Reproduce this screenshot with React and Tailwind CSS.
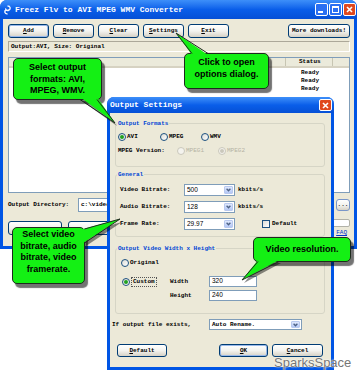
import React from "react";

function Btn({ children, className = "" }) {
  return (
    <div
      className={
        "flex items-center justify-center rounded-[3px] border border-[#003c74] bg-linear-to-b from-[#ffffff] via-[#f3f3ef] to-[#d6d2c6] text-[6px] leading-none text-black " +
        className
      }
    >
      {children}
    </div>
  );
}

function Radio({ checked, disabled }) {
  return (
    <span
      className={
        "flex h-[8px] w-[8px] shrink-0 items-center justify-center rounded-full border " +
        (disabled
          ? "border-[#cac8bb] bg-[#f4f3ee]"
          : "border-[#1c5180] bg-linear-to-br from-[#dcdcd6] to-white")
      }
    >
      {checked && (
        <span
          className={
            "h-[4px] w-[4px] rounded-full " +
            (disabled ? "bg-[#cac8bb]" : "bg-[#21a121]")
          }
        />
      )}
    </span>
  );
}

function Combo({ value, className = "", mono = false }) {
  return (
    <div className={"flex items-stretch border border-[#7f9db9] bg-white " + className}>
      <span
        className={
          "flex flex-1 items-center pl-[2px] leading-none text-black " +
          (mono
            ? "text-[6px]"
            : "font-['Liberation_Sans',Arial,sans-serif] text-[6.5px] font-normal")
        }
      >
        {value}
      </span>
      <span className="m-[1px] flex w-[9px] items-center justify-center rounded-[1px] border border-[#b9c9ef] bg-linear-to-b from-[#e0e9fd] to-[#b4c8f6]">
        <svg width="5" height="4" viewBox="0 0 5 4">
          <path d="M0.6 0.8 L2.5 2.8 L4.4 0.8" stroke="#4d6185" strokeWidth="1.3" fill="none" />
        </svg>
      </span>
    </div>
  );
}

function Group({ title, className = "", children }) {
  return (
    <div className={"relative rounded-[3px] border border-[#d6d5c6] " + className}>
      <span className="absolute -top-[4px] left-[1px] bg-[#ece9d8] px-[1px] text-[6px] leading-[7px] text-[#0046d5]">
        {title}
      </span>
      {children}
    </div>
  );
}

function Bubble({ className = "", children }) {
  return (
    <div
      className={
        "absolute rounded-[5px] border border-[#1e2a1e] bg-[#14f014] text-center font-['Liberation_Sans',Arial,sans-serif] text-[9px] font-bold leading-[11.5px] text-black shadow-[3px_4px_1px_rgba(0,0,0,0.55)] " +
        className
      }
    >
      {children}
    </div>
  );
}

export default function App() {
  return (
    <div className="relative h-[373px] w-[360px] overflow-hidden bg-white font-['Liberation_Mono',monospace]">
      {/* Main window */}
      <div className="flex h-[249px] w-[357px] flex-col rounded-t-[7px] bg-[#0055e5]">
        <div className="flex h-[19px] items-center rounded-t-[7px] bg-linear-to-b from-[#3d8ff9] via-[#0a5ee9] to-[#0650d6] pl-[3px] pr-[1px]">
          <svg width="9" height="10" viewBox="0 0 9 10">
            <path d="M4.5 1 C7.5 1 8 4 6 5 C4 6 2 5 3 3.5 M4.5 9 C1.5 9 1 6 3 5" stroke="#f0f4ff" strokeWidth="1.4" fill="none" />
          </svg>
          <span className="ml-[3px] text-[8px] font-bold leading-none text-white">
            Freez Flv to AVI MPEG WMV Converter
          </span>
          <div className="ml-auto flex gap-[1px]">
            <div className="flex h-[13px] w-[13px] items-end rounded-[2px] border border-white bg-[#2a6ff2] pb-[2px] pl-[2px]">
              <div className="h-[2px] w-[5px] bg-white" />
            </div>
            <div className="flex h-[13px] w-[13px] items-center justify-center rounded-[2px] border border-white bg-[#2a6ff2]">
              <div className="h-[7px] w-[7px] border border-t-2 border-white" />
            </div>
            <div className="flex h-[13px] w-[13px] items-center justify-center rounded-[2px] border border-white bg-[#e0481e]">
              <svg width="7" height="7" viewBox="0 0 7 7">
                <path d="M1 1 L6 6 M6 1 L1 6" stroke="white" strokeWidth="1.6" />
              </svg>
            </div>
          </div>
        </div>
        <div className="mx-[3px] mb-[3px] flex flex-1 flex-col bg-[#ece9d8] pl-[5px] pr-[4px] pt-[5px] font-bold">
          <div className="flex h-[14px] gap-[4px]">
            <Btn className="w-[41px] border-[#1b3f9a] shadow-[inset_0_0_0_1px_#98b8ea]">
              <span className="underline">A</span>dd
            </Btn>
            <Btn className="w-[41px]">
              <span className="underline">R</span>emove
            </Btn>
            <Btn className="w-[41px]">
              <span className="underline">C</span>lear
            </Btn>
            <Btn className="w-[41px]">
              <span className="underline">S</span>ettings
            </Btn>
            <Btn className="w-[41px]">
              <span className="underline">E</span>xit
            </Btn>
            <Btn className="ml-auto w-[62px]">More downloads!</Btn>
          </div>
          <div className="mt-[3px] flex h-[11px] items-center border border-b-white border-l-[#aca899] border-r-white border-t-[#aca899] pl-[2px] text-[6px] leading-none text-black">
            Output:AVI, Size: Original
          </div>
          <div className="mt-[5px] flex h-[136px] flex-col border border-[#7f9db9] bg-white">
            <div className="flex h-[10px] border-b-2 border-[#d6d2c2] bg-[#ebeadb] text-[6px] leading-none text-black">
              <div className="w-[277px] border-r border-[#c7c5b2]" />
              <div className="flex w-[47px] items-center border-r border-[#c7c5b2] pl-[13px]">Status</div>
              <div className="flex-1" />
            </div>
            <div className="flex flex-col pt-[1px] text-[6px] leading-none text-black">
              <div className="flex h-[8px] items-center pl-[292px]">Ready</div>
              <div className="flex h-[8px] items-center pl-[292px]">Ready</div>
              <div className="flex h-[8px] items-center pl-[292px]">Ready</div>
            </div>
          </div>
          <div className="mt-[5px] flex h-[14px] items-center text-[6px] leading-none text-black">
            <span className="w-[70px]">Output Directory:</span>
            <div className="flex h-[14px] flex-1 items-center border border-[#7f9db9] bg-white pl-[2px]">c:\video\</div>
            <Btn className="ml-[3px] h-[12px] w-[14px] border-[#7a96c8]">...</Btn>
          </div>
          <div className="mt-[7px] flex items-start">
            <Btn className="mt-[2px] h-[14px] w-[54px]"> </Btn>
            <Btn className="ml-[6px] mt-[2px] h-[14px] w-[54px]"> </Btn>
            <div className="ml-[6px] flex flex-1 flex-col items-end">
              <div className="h-[8px] w-full rounded-[2px] border border-[#b2b2a8] bg-white" />
              <span className="mr-[3px] mt-[3px] text-[6px] font-normal leading-none text-[#0033cc] underline">FAQ</span>
            </div>
          </div>
        </div>
      </div>

      {/* Output Settings dialog */}
      <div className="absolute left-[107px] top-[97px] flex h-[273px] w-[227px] flex-col rounded-t-[7px] bg-[#0055e5]">
        <div className="flex h-[16px] items-center rounded-t-[7px] bg-linear-to-b from-[#3d8ff9] via-[#0a5ee9] to-[#0650d6] pl-[3px] pr-[2px]">
          <span className="text-[8px] font-bold leading-none text-white">Output Settings</span>
          <div className="ml-auto flex h-[12px] w-[13px] items-center justify-center rounded-[2px] border border-white bg-[#e0481e]">
            <svg width="7" height="7" viewBox="0 0 7 7">
              <path d="M1 1 L6 6 M6 1 L1 6" stroke="white" strokeWidth="1.6" />
            </svg>
          </div>
        </div>
        <div className="mx-[3px] mb-[3px] flex flex-1 flex-col bg-[#ece9d8] text-[6px] font-bold leading-none text-black">
          <Group title="Output Formats" className="ml-[5px] mt-[10px] h-[44px] w-[210px]">
            <div className="flex flex-col pl-[2px] pt-[8px]">
              <div className="flex h-[10px] items-center">
                <span className="flex w-[42px] items-center gap-[1px]">
                  <Radio checked />
                  AVI
                </span>
                <span className="flex w-[41px] items-center gap-[1px]">
                  <Radio />
                  MPEG
                </span>
                <span className="flex items-center gap-[1px]">
                  <Radio />
                  WMV
                </span>
              </div>
              <div className="mt-[4px] flex h-[10px] items-center">
                <span className="w-[59px]">MPEG Version:</span>
                <span className="flex w-[41px] items-center gap-[1px] font-normal text-[#b5b3a4]">
                  <Radio disabled />
                  MPEG1
                </span>
                <span className="flex items-center gap-[1px] font-normal text-[#b5b3a4]">
                  <Radio disabled checked />
                  MPEG2
                </span>
              </div>
            </div>
          </Group>

          <Group title="General" className="ml-[5px] mt-[7px] h-[63px] w-[210px]">
            <div className="flex flex-col gap-[5px] pl-[4px] pt-[9px]">
              <div className="flex h-[12px] items-center">
                <span className="w-[64px]">Video Bitrate:</span>
                <Combo value="500" className="h-[12px] w-[51px]" />
                <span className="ml-[3px]">kbits/s</span>
              </div>
              <div className="flex h-[12px] items-center">
                <span className="w-[64px]">Audio Bitrate:</span>
                <Combo value="128" className="h-[12px] w-[51px]" />
                <span className="ml-[3px]">kbits/s</span>
              </div>
              <div className="flex h-[12px] items-center">
                <span className="w-[64px]">Frame Rate:</span>
                <Combo value="29.97" className="h-[12px] w-[51px]" />
                <span className="ml-[27px] h-[8px] w-[8px] border border-[#1c5180] bg-linear-to-br from-[#dcdcd6] to-white" />
                <span className="ml-[2px]">Default</span>
              </div>
            </div>
          </Group>

          <Group title="Output Video Width x Height" className="ml-[5px] mt-[11px] h-[66px] w-[210px]">
            <div className="flex flex-col pl-[5px] pt-[9px]">
              <div className="flex h-[10px] items-center gap-[1px]">
                <Radio />
                Original
              </div>
              <div className="mt-[8px] flex">
                <div className="flex h-[11px] w-[49px] items-center gap-[1px] pl-[1px]">
                  <Radio checked />
                  <span className="border border-dotted border-[#555] px-[1px] py-[1px]">Custom</span>
                </div>
                <div className="flex flex-col gap-[3px]">
                  <div className="flex h-[11px] items-center">
                    <span className="w-[39px]">Width</span>
                    <div className="flex h-[11px] w-[48px] items-center border border-[#7f9db9] bg-white pl-[2px] font-['Liberation_Sans',Arial,sans-serif] text-[6.5px] font-normal">
                      320
                    </div>
                  </div>
                  <div className="flex h-[11px] items-center">
                    <span className="w-[39px]">Height</span>
                    <div className="flex h-[11px] w-[48px] items-center border border-[#7f9db9] bg-white pl-[2px] font-['Liberation_Sans',Arial,sans-serif] text-[6.5px] font-normal">
                      240
                    </div>
                  </div>
                </div>
              </div>
            </div>
          </Group>

          <div className="ml-[2px] mt-[5px] flex h-[11px] items-center">
            <span className="w-[97px]">If output file exists,</span>
            <Combo value="Auto Rename." mono className="h-[11px] w-[93px]" />
          </div>

          <div className="ml-[7px] mt-[14px] flex h-[13px]">
            <Btn className="w-[50px]">
              <span className="underline">D</span>efault
            </Btn>
            <Btn className="ml-[52px] w-[49px] border-[#1b3f9a] shadow-[inset_0_0_0_1px_#98b8ea]">
              <span className="underline">O</span>K
            </Btn>
            <Btn className="ml-[4px] w-[51px]">
              <span className="underline">C</span>ancel
            </Btn>
          </div>
        </div>
      </div>

      {/* Tail shadows */}
      <svg className="pointer-events-none absolute left-0 top-0" width="360" height="373" viewBox="0 0 360 373">
        <polygon points="82,101 99,101 117,126" fill="rgba(0,0,0,0.45)" />
        <polygon points="86,232 86,246 122,222" fill="rgba(0,0,0,0.45)" />
        <polygon points="260,263 281,263 244,283" fill="rgba(0,0,0,0.45)" />
      </svg>

      <Bubble className="left-[13px] top-[58px] h-[42px] w-[89px] pt-[3px]">
        Select output
        <br />
        formats: AVI,
        <br />
        MPEG, WMV.
      </Bubble>
      <Bubble className="left-[184px] top-[53px] h-[36px] w-[85px] pt-[3px]">
        Click to open
        <br />
        options dialog.
      </Bubble>
      <Bubble className="left-[12px] top-[227px] h-[57px] w-[73px] pt-[1px]">
        Select video
        <br />
        bitrate, audio
        <br />
        bitrate, video
        <br />
        framerate.
      </Bubble>
      <Bubble className="left-[253px] top-[237px] flex h-[25px] w-[98px] items-center justify-center">
        Video resolution.
      </Bubble>

      {/* Tails */}
      <svg className="pointer-events-none absolute left-0 top-0" width="360" height="373" viewBox="0 0 360 373">
        <g fill="#14f014">
          <polygon points="80,97 97,97 115,123" />
          <polygon points="192,55 208,55 176,33" />
          <polygon points="83,229 83,243 120,219" />
          <polygon points="258,260 279,260 242,280" />
        </g>
        <g stroke="#1e2a1e" strokeWidth="1" fill="none">
          <polyline points="80,99.5 115,123 97,99.5" />
          <polyline points="192,53.5 176,33 208,53.5" />
          <polyline points="84.5,229 120,219 84.5,243" />
          <polyline points="258,261.5 242,280 279,261.5" />
        </g>
      </svg>

      {/* Watermark */}
      <div className="absolute left-[274px] top-[356px] font-['Liberation_Sans',Arial,sans-serif] text-[13px] leading-none text-[#767676] [text-shadow:0_0_1px_#fff,0_0_2px_#fff]">
        SparksSpace
      </div>
    </div>
  );
}
